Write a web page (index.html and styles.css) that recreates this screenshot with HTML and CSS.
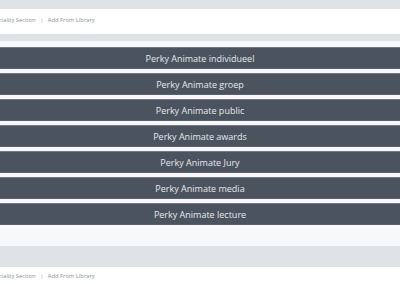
FILE: index.html
```html
<!DOCTYPE html>
<html lang="en">
<head>
    <meta charset="UTF-8">
    <meta name="viewport" content="width=device-width, initial-scale=1.0">
    <title>Perky Animate</title>
    <link rel="stylesheet" href="styles.css">
</head>
<body>

    <div class="top-strip"></div>

    <!-- Section toolbar -->
    <div class="toolbar">
        <span class="toolbar-links">
            <a href="#">Speciality Section</a>
            <span class="sep">|</span>
            <a href="#">Add From Library</a>
        </span>
    </div>

    <div class="divider"></div>

    <div class="button-list">
        <button class="perky-button">Perky Animate individueel</button>
        <button class="perky-button">Perky Animate groep</button>
        <button class="perky-button">Perky Animate public</button>
        <button class="perky-button">Perky Animate awards</button>
        <button class="perky-button">Perky Animate Jury</button>
        <button class="perky-button">Perky Animate media</button>
        <button class="perky-button">Perky Animate lecture</button>
    </div>

    <div class="divider tall"></div>

    <!-- Section toolbar -->
    <div class="toolbar bottom">
        <span class="toolbar-links">
            <a href="#">Speciality Section</a>
            <span class="sep">|</span>
            <a href="#">Add From Library</a>
        </span>
    </div>

</body>
</html>
```

FILE: styles.css
```css
html, body {
    margin: 0;
    padding: 0;
    font-family: "Open Sans", Arial, sans-serif;
    background-color: #ffffff;
    overflow: hidden;
}

.top-strip {
    height: 9px;
    background-color: #dfe3e6;
}

.toolbar {
    height: 21px;
    padding-bottom: 4px;
    display: flex;
    align-items: center;
    background-color: #ffffff;
    font-size: 5.8px;
    color: #8a9096;
}

.toolbar.bottom {
    height: 17px;
    padding-bottom: 0;
}

.toolbar-links {
    margin-left: -11px;
    white-space: nowrap;
}

.toolbar a {
    color: #8a9096;
    text-decoration: none;
}

.toolbar .sep {
    margin: 0 3px;
    color: #9aa0a6;
}

.divider {
    height: 7px;
    background-color: #dfe3e6;
}

.divider.tall {
    height: 21px;
}

.button-list {
    display: flex;
    flex-direction: column;
    gap: 4px;
    padding: 6px 0 21px;
    background-color: #f6f8f9;
}

.perky-button {
    height: 22px;
    width: 100%;
    padding: 0;
    background-color: #4b535f;
    color: #e6e8eb;
    font-family: "Open Sans", Arial, sans-serif;
    font-size: 9px;
    border: none;
    border-top: 1px solid #737a84;
    border-bottom: 1px solid #5a616b;
    cursor: pointer;
}

.perky-button:hover {
    background-color: #3f4651;
}
```
